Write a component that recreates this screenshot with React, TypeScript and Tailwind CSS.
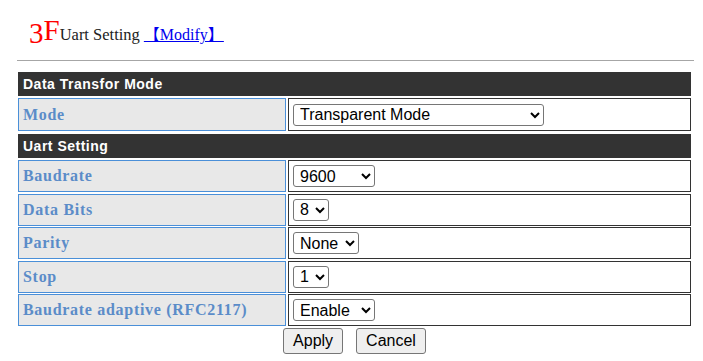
import { useState } from "react";

const serif = "font-['Liberation_Serif','Times_New_Roman',serif]";
const sans = "font-['Liberation_Sans',Arial,sans-serif]";

const ROWS = [
  { label: "Baudrate", options: ["9600", "19200", "38400", "57600", "115200"], width: "w-[82px]" },
  { label: "Data Bits", options: ["8", "7"], width: "w-[36px]" },
  { label: "Parity", options: ["None", "Odd", "Even"], width: "w-[66px]" },
  { label: "Stop", options: ["1", "2"], width: "w-[36px]" },
  { label: "Baudrate adaptive (RFC2117)", options: ["Enable", "Disable"], width: "w-[82px]" },
];

function SectionBar({ title, extra }: { title: string; extra?: string }) {
  return (
    <div
      className={`col-span-2 h-[24px] flex items-center bg-[#333333] pl-[5px] text-white font-bold text-[14px] tracking-[0.5px] ${sans} ${extra ?? ""}`}
    >
      {title}
    </div>
  );
}

function Row({
  label,
  options,
  width,
  tall,
}: {
  label: string;
  options: string[];
  width: string;
  tall?: boolean;
}) {
  const [value, setValue] = useState(options[0]);
  const h = tall ? "h-[33px]" : "h-[32px]";
  return (
    <>
      <div
        className={`${h} flex items-center border border-[#4a8fd8] bg-[#e8e8e8] pl-[4px] text-[16px] font-bold tracking-[0.7px] text-[#5b8cc8] ${serif}`}
      >
        {label}
      </div>
      <div className={`${h} flex items-center border border-[#333333] bg-white pl-[4px]`}>
        <select
          value={value}
          onChange={(e) => setValue(e.target.value)}
          className={`${width} h-[22px] border border-[#767676] rounded-[3px] bg-white pl-[2px] text-[16px] text-black ${sans}`}
        >
          {options.map((o) => (
            <option key={o}>{o}</option>
          ))}
        </select>
      </div>
    </>
  );
}

export default function App() {
  return (
    <div className="bg-white w-[703px] h-[361px]">
      {/* Title */}
      <div className={`h-[60px] pt-[16px] pl-[29px] flex items-baseline ${serif}`}>
        <span className="text-[29px] leading-none text-[#ff0000]">
          <span className="relative top-[3px]">3</span>F
        </span>
        <span className="text-[16.5px] text-[#222222]">Uart Setting</span>
        <span className="text-[16px]">&nbsp;</span>
        <a href="#" className="text-[16px] text-[#0000ee] underline font-['Liberation_Serif','Noto_Sans_CJK_SC',serif]">
          【Modify】
        </a>
      </div>
      <div className="ml-[17px] w-[677px] h-px bg-[#a6a6a6]" />

      {/* Settings table */}
      <div className="ml-[18px] mt-[11px] w-[673px] grid grid-cols-[268px_403px] gap-x-[2px] gap-y-[1.5px]">
        <SectionBar title="Data Transfor Mode" extra="mb-[0.5px]" />
        <Row label="Mode" options={["Transparent Mode", "Modbus TCP"]} width="w-[251px]" tall />
        <SectionBar title="Uart Setting" extra="mt-[1.5px] mb-[0.5px]" />
        {ROWS.map((r) => (
          <Row key={r.label} label={r.label} options={r.options} width={r.width} />
        ))}
      </div>

      {/* Buttons */}
      <div className={`w-[673px] ml-[18px] mt-[2px] flex justify-center gap-[13px] ${sans}`}>
        <button className="h-[26px] px-[9px] border border-[#767676] rounded-[3px] bg-[#efefef] text-[16px] text-black">
          Apply
        </button>
        <button className="h-[26px] px-[9px] border border-[#767676] rounded-[3px] bg-[#efefef] text-[16px] text-black">
          Cancel
        </button>
      </div>
    </div>
  );
}
